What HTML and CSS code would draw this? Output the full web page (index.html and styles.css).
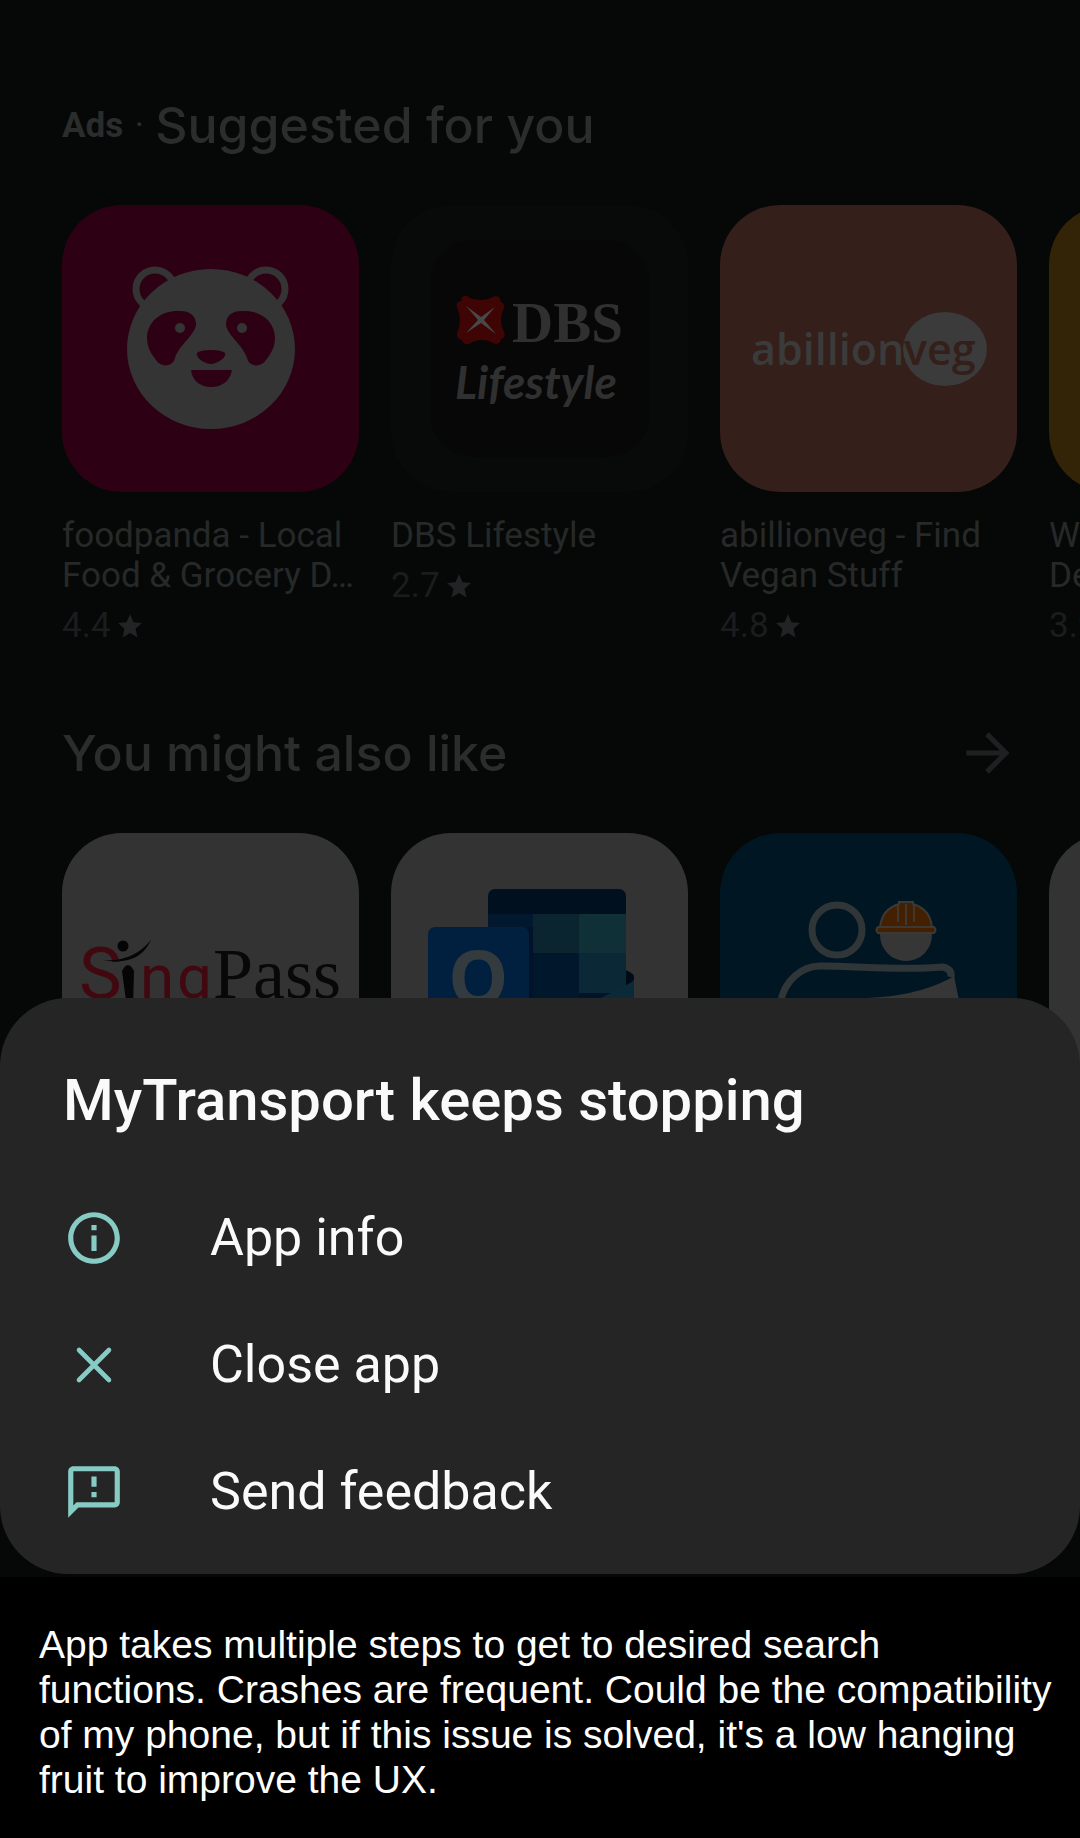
FILE: index.html
```html
<!DOCTYPE html>
<html lang="en">
<head>
<meta charset="utf-8">
<meta name="viewport" content="width=device-width, initial-scale=1">
<title>MyTransport keeps stopping</title>
<link rel="stylesheet" href="styles.css">
</head>
<body>
<main class="store">
  <section class="shelf">
    <header class="shelf-head">
      <span class="ads">Ads</span><span class="dot">·</span>
      <h2 class="shelf-title">Suggested for you</h2>
    </header>
    <div class="row">
      <article class="app">
        <svg class="tile tile-panda" viewBox="0 0 297 287" aria-hidden="true">
          <g fill="#2e0014" stroke="#343434" stroke-width="7">
            <circle cx="93" cy="84" r="19"/><circle cx="204" cy="84" r="19"/>
          </g>
          <ellipse cx="149" cy="144" rx="84" ry="80" fill="#343434"/>
          <g id="eye">
            <path fill="#2e0014" d="M116 106C128 105 134 111 134 119C134 129 117 140 113 153C111 162 99 163 94 155C88 147 85 142 85 132C86 116 99 106 116 106Z"/>
            <circle cx="118" cy="123" r="5" fill="#343434"/>
          </g>
          <use href="#eye" transform="translate(298 0) scale(-1 1)"/>
          <path fill="#2e0014" d="M135 148C138 144 160 144 163 148C165 153 154 159 149 159C144 159 133 153 135 148ZM129 165H170C168 176 160 182 149 182C139 182 130 176 129 165Z"/>
        </svg>
        <h3 class="name">foodpanda - Local<br>Food &amp; Grocery D…</h3>
        <p class="rating">4.4 <svg class="star" viewBox="0 0 24 24" aria-hidden="true"><path d="M12 0l3.500 8.200 8.500.8-6.500 5.800 2 8.700L12 19l-7.500 4.500 2-8.700L0 9l8.500-.8z"/></svg></p>
      </article>
      <article class="app">
        <svg class="tile tile-dbs" viewBox="0 0 297 287" aria-hidden="true">
          <rect x="39" y="35" width="220" height="217" rx="44" fill="#070707"/>
          <path fill="#3f0404" d="M71 92q4-3 8 1q11 4 21 0q5-4 9 0l0 3q5 2 4 7q-6 12 0 24q3 5-3 7q0 5-6 5q-14-8-26 0q-6 1-7-4q-6-1-5-7q6-13 0-25q-2-6 4-7z"/>
          <path fill="#484848" d="M75 101L90 112L104 102L93 115L105 129L90 118L75 128L87 115Z"/>
          <text class="logo-dbs" x="121" y="137">DBS</text>
          <text class="logo-life" x="64" y="194">Lifestyle</text>
        </svg>
        <h3 class="name">DBS Lifestyle</h3>
        <p class="rating">2.7 <svg class="star" viewBox="0 0 24 24" aria-hidden="true"><path d="M12 0l3.500 8.200 8.500.8-6.500 5.800 2 8.700L12 19l-7.500 4.500 2-8.700L0 9l8.500-.8z"/></svg></p>
      </article>
      <article class="app">
        <svg class="tile tile-veg" viewBox="0 0 297 287" aria-hidden="true">
          <ellipse cx="225" cy="144" rx="42" ry="37" fill="#3b3b3b"/>
          <text class="logo-veg" x="31" y="160" fill="#3b3b3b">abillion</text>
          <text class="logo-veg" x="184" y="160" fill="#341f1a">veg</text>
        </svg>
        <h3 class="name">abillionveg - Find<br>Vegan Stuff</h3>
        <p class="rating">4.8 <svg class="star" viewBox="0 0 24 24" aria-hidden="true"><path d="M12 0l3.500 8.200 8.500.8-6.500 5.800 2 8.700L12 19l-7.500 4.500 2-8.700L0 9l8.500-.8z"/></svg></p>
      </article>
      <article class="app">
        <div class="tile tile-gold"></div>
        <h3 class="name">W<br>De</h3>
        <p class="rating">3.9</p>
      </article>
    </div>
  </section>

  <section class="shelf">
    <header class="shelf-head">
      <h2 class="shelf-title">You might also like</h2>
      <a class="more" href="#more" aria-label="See more">
        <svg viewBox="0 0 24 24" aria-hidden="true"><path d="M4 12H19M12 4.700L19.300 12L12 19.300" fill="none" stroke="currentColor" stroke-width="2"/></svg>
      </a>
    </header>
    <div class="row">
      <svg class="tile tile-white" viewBox="0 0 297 287" aria-hidden="true">
        <text class="logo-sing logo-sing-cap" x="17" y="166">S</text>
        <circle cx="61" cy="113" r="5.500" fill="#050505"/>
        <path fill="#050505" d="M40 127Q70 130 89 107Q77 134 40 127ZM60 138Q66 126 72 138L71 175H65Z"/>
        <text class="logo-sing" x="78" y="165">n</text>
        <text class="logo-sing" x="115" y="165">g</text>
        <text class="logo-pass" x="151" y="165">Pass</text>
      </svg>
      <svg class="tile tile-white" viewBox="0 0 297 287" aria-hidden="true">
        <path fill="#0a2734" d="M235 138l8 4v60h-33z"/>
        <path fill="#010a18" d="M234 137q12 4 8 11l-8 6z"/>
        <rect x="97" y="56" width="138" height="180" rx="7" fill="#00101f"/>
        <path fill="#01182e" d="M97 81h45v150H97z"/>
        <path fill="#0b2530" d="M142 81h46v39h-46z"/>
        <path fill="#103037" d="M188 81h47v39h-47z"/>
        <path fill="#01172c" d="M142 120h46v110h-46z"/>
        <path fill="#0b2837" d="M188 120h47v40h-47z"/>
        <path fill="#01142a" d="M188 160h47v60h-47z"/>
        <path fill="#0a2a3a" d="M210 165l33-17v60h-50z"/>
        <path fill="#001328" d="M137 94h5v140h-5z"/>
        <rect x="37" y="94" width="101" height="110" rx="7" fill="#01203f"/>
        <text class="logo-o" x="57" y="172">O</text>
      </svg>
      <svg class="tile tile-blue" viewBox="0 0 297 287" aria-hidden="true">
        <g fill="none" stroke="#303538" stroke-width="7">
          <circle cx="117" cy="97" r="25"/>
          <path d="M60 172C64 145 84 133 100 133C140 133 180 138 223 134Q232 136 231 144"/>
        </g>
        <path fill="#363636" d="M227 147Q231 145 234 143L240 172H140Q140 165 147 165Q195 163 227 147Z"/>
        <circle cx="186" cy="102" r="26" fill="#363636"/>
        <path fill="#452000" stroke="#3c3834" stroke-width="2" d="M160 94Q162 76 179 71V69H193V71Q210 76 212 94ZM158 94H214Q217 97 214 100H158Q155 97 158 94Z"/>
        <path stroke="#3c3834" stroke-width="2" d="M178 71V89M186 71V92M194 71V89"/>
      </svg>
      <div class="tile tile-white"></div>
    </div>
  </section>
</main>

<section class="sheet" role="dialog" aria-labelledby="sheet-title">
  <h1 class="sheet-title" id="sheet-title">MyTransport keeps stopping</h1>
  <div class="actions">
    <button class="action" type="button">
      <svg class="icon" viewBox="0 0 24 24" aria-hidden="true"><path fill="currentColor" d="M11 7h2v2h-2zm0 4h2v6h-2zm1-9C6.480 2 2 6.480 2 12s4.480 10 10 10 10-4.480 10-10S17.520 2 12 2zm0 18c-4.410 0-8-3.590-8-8s3.590-8 8-8 8 3.590 8 8-3.590 8-8 8z"/></svg>
      App info
    </button>
    <button class="action" type="button">
      <svg class="icon" viewBox="0 0 24 24" aria-hidden="true"><path fill="none" stroke="currentColor" stroke-width="1.800" stroke-linecap="round" d="M6.200 6.200L17.800 17.800M17.800 6.200L6.200 17.800"/></svg>
      Close app
    </button>
    <button class="action" type="button">
      <svg class="icon" viewBox="0 0 24 24" aria-hidden="true"><path fill="currentColor" d="M20 2H4c-1.100 0-2 .9-2 2v18l4-4h14c1.100 0 2-.9 2-2V4c0-1.100-.9-2-2-2zm0 14H5.200L4 17.200V4h16v12zM11 6h2v4h-2zm0 6h2v2h-2z"/></svg>
      Send feedback
    </button>
  </div>
</section>

<p class="caption">App takes multiple steps to get to desired search<br>functions. Crashes are frequent. Could be the compatibility<br>of my phone, but if this issue is solved, it's a low hanging<br>fruit to improve the UX.</p>
</body>
</html>
```
FILE: styles.css
```css
* { box-sizing: border-box; }

body {
  margin: 0;
  background: #050807;
  font-family: Roboto, "Liberation Sans", sans-serif;
}

h1, h2, h3, p { margin: 0; }

.store {
  padding: 95px 0 0 62px;
  overflow: hidden;
}

.shelf + .shelf { margin-top: 77px; }

.shelf-head {
  display: flex;
  align-items: center;
  height: 60px;
  margin-bottom: 50px;
  padding-right: 62px;
  color: #2b2c2c;
}

.ads {
  font-size: 35px;
  font-weight: 700;
}

.dot {
  width: 32px;
  font-size: 35px;
  text-align: center;
}

.shelf-title {
  font-family: Inter, sans-serif;
  font-size: 50px;
  font-weight: 500;
  line-height: 60px;
}

.more {
  display: flex;
  width: 62px;
  margin-left: auto;
  color: #1f2021;
}

.more svg { width: 62px; }

.row {
  display: flex;
  gap: 32px;
}

.app {
  flex: 0 0 297px;
  white-space: nowrap;
}

.tile {
  display: block;
  flex: 0 0 297px;
  width: 297px;
  height: 287px;
  border-radius: 60px;
}

.tile-panda { background: #2e0014; }
.tile-dbs { background: #080a09; }
.tile-veg { background: #341f1a; }
.tile-gold { background: #332408; }
.tile-white { background: #333; }
.tile-blue { background: #001622; }

.name {
  margin-top: 24px;
  color: #272828;
  font-size: 35px;
  font-weight: 400;
  line-height: 40px;
}

.rating {
  display: flex;
  align-items: center;
  gap: 7px;
  margin-top: 10px;
  color: #1b1c1e;
  font-size: 35px;
  line-height: 40px;
}

.star {
  width: 24px;
  height: 24px;
  fill: #222325;
}

.logo-dbs {
  fill: #303030;
  font: 700 57px "Liberation Serif", serif;
}

.logo-life {
  fill: #303030;
  font: italic 700 46px Lato, sans-serif;
}

.logo-veg { font: 600 43px "Open Sans", sans-serif; }

.logo-sing {
  fill: #420810;
  font: 400 62px Roboto, sans-serif;
}

.logo-sing-cap { font-size: 72px; }

.logo-pass {
  fill: #080808;
  font: 400 72px "Liberation Serif", serif;
}

.logo-o {
  fill: #343b3f;
  font: 700 76px "Open Sans", sans-serif;
}

.sheet {
  position: relative;
  margin-top: -122px;
  padding: 68px 63px 19px;
  border-radius: 68px;
  background: #252525;
  color: #fafafa;
}

.sheet-title {
  font-size: 58px;
  font-weight: 500;
  line-height: 68px;
}

.actions {
  display: flex;
  flex-direction: column;
  margin-top: 40px;
}

.action {
  display: flex;
  align-items: center;
  gap: 85px;
  height: 127px;
  padding: 0;
  border: 0;
  background: none;
  color: inherit;
  font: inherit;
  font-size: 52px;
  text-align: left;
}

.icon {
  width: 62px;
  height: 62px;
  color: #87cbc5;
}

.caption {
  margin-top: 3px;
  padding: 45px 20px 36px 39px;
  background: #000;
  color: #fff;
  font-family: "Liberation Sans", Arial, sans-serif;
  font-size: 39px;
  line-height: 45px;
}
```
